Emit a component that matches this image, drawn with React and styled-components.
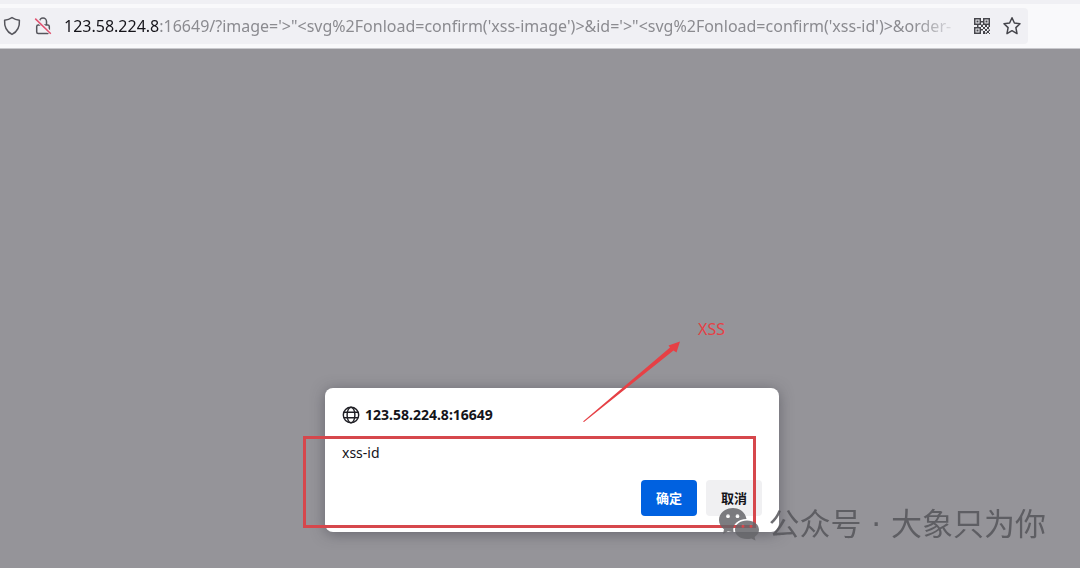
import React from "react"
import styled, { createGlobalStyle } from "styled-components"

const host = "123.58.224.8"
const rest = `:16649/?image='>"<svg%2Fonload=confirm('xss-image')>&id='>"<svg%2Fonload=confirm('xss-id')>&order-`

export default function App(){
    return(
        <>
            <GlobalStyle />
            <Browser>
                <Toolbar>
                    <UrlBar>
                        <IconButton type="button" aria-label="Tracking protection">
                            <ShieldIcon />
                        </IconButton>
                        <IconButton type="button" aria-label="Connection not secure">
                            <LockIcon />
                        </IconButton>
                        <Url><Host>{host}</Host>{rest}</Url>
                        <IconButton type="button" aria-label="QR code">
                            <QrIcon />
                        </IconButton>
                        <IconButton type="button" aria-label="Bookmark">
                            <StarIcon />
                        </IconButton>
                    </UrlBar>
                </Toolbar>
                <Page>
                    <Dialog role="dialog" aria-labelledby="dialog-title">
                        <Header>
                            <GlobeIcon />
                            <Title id="dialog-title">{host}:16649</Title>
                        </Header>
                        <Message>xss-id</Message>
                        <Actions>
                            <Button type="button" $primary>确定</Button>
                            <Button type="button">取消</Button>
                        </Actions>
                        <Highlight />
                        <Arrow viewBox="0 0 100 84" aria-hidden="true">
                            <path d="M1 82.500 L88 8.500 L86.500 6.500 L98 2.500 L94.500 13.500 L91.500 11.500 L2 83 Z" fill="#e64045" />
                        </Arrow>
                        <Note>XSS</Note>
                    </Dialog>
                    <Watermark>
                        <WechatIcon />
                        <span>公众号 · 大象只为你</span>
                    </Watermark>
                </Page>
            </Browser>
        </>
    )
}

function ShieldIcon(){
    return(
        <svg width="20" height="20" viewBox="0 0 20 20" fill="none" stroke="#55555c" strokeWidth="1.5" strokeLinejoin="round">
            <path d="M10 1.600 C12.400 3.200 15 4 17.400 4.300 C17.800 10.500 16 15.500 10 18.400 C4 15.500 2.200 10.500 2.600 4.300 C5 4 7.600 3.200 10 1.600 Z" />
        </svg>
    )
}

function LockIcon(){
    return(
        <svg width="20" height="20" viewBox="0 0 20 20" fill="none" stroke="#55555c" strokeWidth="1.500" strokeLinejoin="round">
            <path d="M6.500 9 V5.500 a3.500 3.500 0 0 1 7 0 V9" />
            <rect x="3.700" y="9" width="12.600" height="8.500" rx="1.500" />
            <path d="M2.500 2.500 L18 17.500" stroke="#f0f0f4" strokeWidth="3.500" />
            <path d="M2.200 2.600 L17.800 17.800" stroke="#e0506e" strokeWidth="1.500" />
        </svg>
    )
}

function QrIcon(){
    return(
        <svg width="18" height="18" viewBox="0 0 18 18" fill="#45454b">
            <path fillRule="evenodd" d="M1 1h7v7H1z M2.500 2.500v4h4v-4z M10 1h7v7h-7z M11.500 2.500v4h4v-4z M1 10h7v7H1z M2.500 11.500v4h4v-4z" />
            <path d="M3.500 3.500h2v2h-2z M12.500 3.500h2v2h-2z M3.500 12.500h2v2h-2z" />
            <path d="M8 4h2v1.500H8z M4 8h1.500v2H4z M8 7.500h2v2.500H8z M12 8h2v2h-2z M15.500 8h1.500v2h-1.500z M8 12h2v1.500H8z" />
            <path d="M10 10h2v2h-2z M14 10h2v2h-2z M12 12h2v2h-2z M15.500 12.500h1.500v1.500h-1.500z M10 14h2v3h-2z M14 14h2v2h-2z M12.500 15.500h1.500v1.500h-1.500z M16 16h1v1h-1z" />
        </svg>
    )
}

function StarIcon(){
    return(
        <svg width="20" height="20" viewBox="0 0 20 20" fill="none" stroke="#45454b" strokeWidth="1.500" strokeLinejoin="round">
            <path d="M10 1.700 L12.400 7 L18 7.700 L13.900 11.600 L15 17.600 L10 14.700 L5 17.600 L6.100 11.600 L2 7.700 L7.600 7 Z" />
        </svg>
    )
}

function GlobeIcon(){
    return(
        <svg width="18" height="18" viewBox="0 0 18 18" fill="none" stroke="#1f1f25" strokeWidth="1.400">
            <circle cx="9" cy="9" r="7.700" />
            <ellipse cx="9" cy="9" rx="3.900" ry="7.700" />
            <path d="M2 6.200 H16 M2 11.800 H16" />
        </svg>
    )
}

function WechatIcon(){
    return(
        <svg width="42" height="34" viewBox="0 0 42 34">
            <path
                fill="#66666a"
                fillRule="evenodd"
                d="M15 1 C7 1 1 6.200 1 13 C1 17 3 20 6 22.200 L5 27 L10 24.300 C12 25 13.500 25.100 15.500 25 C14 17.500 20 12 28.500 12 C27.500 5.500 22 1 15 1 Z M10 7.300 a1.900 1.900 0 1 1 0 3.800 a1.900 1.900 0 1 1 0 -3.800 Z M19.500 7.300 a1.900 1.900 0 1 1 0 3.800 a1.900 1.900 0 1 1 0 -3.800 Z"
            />
            <path
                fill="#66666a"
                fillRule="evenodd"
                d="M29 13.500 C22 13.500 17 17.500 17 22.800 C17 28 22 32 29 32 C30.500 32 32 31.800 33.300 31.400 L37.500 33.600 L36.600 29.900 C39.500 28 41 25.700 41 22.800 C41 17.500 36 13.500 29 13.500 Z M25 17.800 a1.500 1.500 0 1 1 0 3 a1.500 1.500 0 1 1 0 -3 Z M33 17.800 a1.500 1.500 0 1 1 0 3 a1.500 1.500 0 1 1 0 -3 Z"
            />
        </svg>
    )
}

const GlobalStyle = createGlobalStyle`
    *{
        box-sizing:border-box;
    }
    body{
        margin:0;
        font-family:"Noto Sans","Noto Sans CJK SC",sans-serif;
    }
    svg{
        display:block;
        flex-shrink:0;
    }
`;

const Browser = styled.div`
    min-height:100vh;
    display:flex;
    flex-direction:column;
`;

const Toolbar = styled.div`
    padding:4px 52px 4px 0;
    border-top:4px solid #f0f0f4;
    border-bottom:1px solid #c9c9cd;
    background:#f9f9fb;
`;

const UrlBar = styled.div`
    height:36px;
    display:flex;
    align-items:center;
    gap:11px;
    padding:0 6px 0 2px;
    border-radius:0 4px 4px 0;
    background:#f0f0f4;
`;

const IconButton = styled.button`
    display:flex;
    padding:0;
    border:0;
    background:transparent;
`;

const Url = styled.div`
    flex:1;
    min-width:0;
    overflow:hidden;
    white-space:nowrap;
    font-size:16px;
    line-height:24px;
    color:#8b8b90;
    mask-image:linear-gradient(to left,transparent,#000 48px);
`;

const Host = styled.span`
    color:#15141a;
`;

const Page = styled.main`
    position:relative;
    flex:1;
    display:flex;
    justify-content:center;
    align-items:flex-end;
    padding:0 0 36px 24px;
    background:#959499;
`;

const Dialog = styled.div`
    position:relative;
    width:454px;
    padding:16px 17px;
    border-radius:8px;
    background:#fff;
    color:#15141a;
    box-shadow:0 2px 14px rgba(58,57,68,0.5);
`;

const Header = styled.div`
    display:flex;
    align-items:center;
    gap:5px;
    height:22px;
`;

const Title = styled.h1`
    margin:0;
    font-size:14px;
    line-height:22px;
    font-weight:700;
`;

const Message = styled.p`
    margin:16px 0;
    font-size:14px;
    line-height:22px;
`;

const Actions = styled.div`
    display:flex;
    justify-content:flex-end;
    gap:9px;
`;

const Button = styled.button`
    width:56px;
    height:36px;
    padding:0 0 2px;
    border:0;
    border-radius:4px;
    background:${props => props.$primary ? "#0061e0" : "#f0f0f2"};
    color:${props => props.$primary ? "#fff" : "#15141a"};
    font-family:inherit;
    font-size:13px;
    font-weight:700;
`;

/* red marks drawn over the dialog */
const Highlight = styled.div`
    position:absolute;
    top:48px;
    left:-22px;
    width:453px;
    height:92px;
    border:3px solid #d6474c;
    pointer-events:none;
`;

const Arrow = styled.svg`
    position:absolute;
    top:-49px;
    left:257px;
    width:100px;
    height:84px;
    pointer-events:none;
`;

const Note = styled.span`
    position:absolute;
    top:-71px;
    left:373px;
    font-size:16px;
    line-height:24px;
    color:#e64045;
`;

const Watermark = styled.div`
    position:absolute;
    right:34px;
    bottom:22px;
    display:flex;
    align-items:center;
    gap:8px;
    font-size:31px;
    line-height:44px;
    font-family:"DejaVu Sans","Noto Sans CJK SC",sans-serif;
    color:#55555a;
    white-space:nowrap;
    opacity:0.85;
`;
